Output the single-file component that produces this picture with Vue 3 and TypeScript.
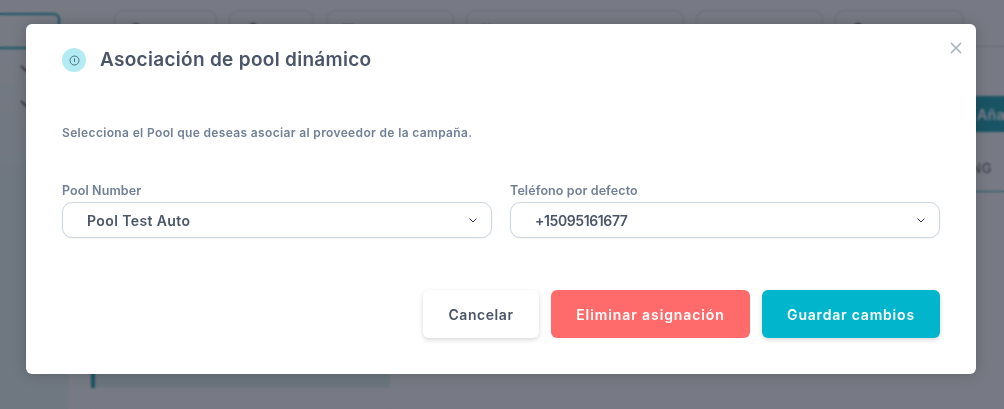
<script setup lang="ts">
const filters = [
  { w: 103, pad: 15, kind: 'search' },
  { w: 85, pad: 17, kind: 'user' },
  { w: 128, pad: 13, kind: 'cal' },
  { w: 218, pad: 15, kind: 'bars' },
  { w: 127, pad: 15, kind: '' },
  { w: 129, pad: 16, kind: 'user' },
]
</script>

<template>
  <div class="page">
    <aside class="side">
      <div class="side-tab"></div>
      <svg class="side-chev" width="12" height="8" viewBox="0 0 12 8"><path d="M1 1l5 5 5-5" /></svg>
      <svg class="side-chev" width="12" height="8" viewBox="0 0 12 8"><path d="M1 1l5 5 5-5" /></svg>
    </aside>
    <main class="content">
      <div class="toolbar">
        <div
          v-for="(f, i) in filters"
          :key="i"
          class="filter"
          :style="{ width: f.w + 'px', paddingLeft: f.pad + 'px' }"
        >
          <svg v-if="f.kind" width="16" height="16" viewBox="0 0 16 16">
            <circle v-if="f.kind === 'search'" cx="6" cy="6" r="5" />
            <circle v-if="f.kind === 'user'" cx="6" cy="5" r="4" fill="currentColor" />
            <path v-if="f.kind === 'cal'" d="M1 5h14M1 5v8M15 5v8M4 1v8M8 1v8M12 1v8M1 3h14" />
            <path v-if="f.kind === 'bars'" d="M2 1v12M7 1v12" />
          </svg>
        </div>
      </div>
      <div class="body">
        <div class="panel"><div class="row"></div></div>
        <div class="detail">
          <button class="add">Añadir</button>
          <div class="thead">TRACKING</div>
        </div>
      </div>
    </main>
    <div class="scrim"></div>
    <section class="modal">
      <button class="close" aria-label="Cerrar">
        <svg width="12" height="12" viewBox="0 0 12 12"><path d="M1 1l10 10M11 1L1 11" /></svg>
      </button>
      <header class="head">
        <span class="badge">
          <svg width="11" height="11" viewBox="0 0 11 11">
            <circle cx="5.5" cy="5.5" r="4.5" />
            <path d="M5.5 3.4v3.6" />
          </svg>
        </span>
        <h2>Asociación de pool dinámico</h2>
      </header>
      <p class="lead">Selecciona el Pool que deseas asociar al proveedor de la campaña.</p>
      <div class="fields">
        <label class="field">
          <span class="lbl">Pool Number</span>
          <span class="select">
            <span class="val">Pool Test Auto</span>
            <svg width="8" height="5" viewBox="0 0 8 5"><path d="M.5.5 4 4 7.5.5" /></svg>
          </span>
        </label>
        <label class="field">
          <span class="lbl">Teléfono por defecto</span>
          <span class="select">
            <span class="val num">+15095161677</span>
            <svg width="8" height="5" viewBox="0 0 8 5"><path d="M.5.5 4 4 7.5.5" /></svg>
          </span>
        </label>
      </div>
      <div class="actions">
        <button class="btn cancel">Cancelar</button>
        <button class="btn danger">Eliminar asignación</button>
        <button class="btn save">Guardar cambios</button>
      </div>
    </section>
  </div>
</template>

<style scoped>
.page {
  position: relative;
  width: 1004px;
  height: 409px;
  overflow: hidden;
  display: flex;
  background: #f6f6f7;
  font-family: Inter, "Open Sans", sans-serif;
}
.side {
  width: 69px;
  flex: none;
  box-sizing: border-box;
  padding-top: 13px;
  border-right: 1px solid #eee;
  background: linear-gradient(180deg, #f6f6f7 0, #e2eeee 180px);
}
.side-tab {
  box-sizing: border-box;
  width: 60px;
  height: 36px;
  border: 2px solid #0a96a8;
  border-left: 0;
  border-radius: 0 6px 6px 0;
  margin-bottom: 16px;
}
.side-chev {
  display: block;
  margin: 0 0 27px 20px;
  fill: none;
  stroke: #222;
  stroke-width: 1.5;
}
.content { flex: 1; min-width: 0; display: flex; flex-direction: column; }
.toolbar {
  flex: none;
  height: 47px;
  box-sizing: border-box;
  padding: 10px 0 0 45px;
  display: flex;
  gap: 12px;
  border-bottom: 1px solid #c5cad2;
}
.filter {
  height: 40px;
  box-sizing: border-box;
  border: 1px solid #c5cbd4;
  border-radius: 10px;
  padding-top: 12px;
  flex: none;
  color: #333;
}
.filter svg { display: block; fill: none; stroke: #333; stroke-width: 1.4; }
.body { flex: 1; display: flex; min-height: 0; }
.panel {
  flex: none;
  width: 301px;
  margin-left: 21px;
  box-sizing: border-box;
  border: 1px solid #eee;
  border-width: 0 1px;
}
.row {
  height: 341px;
  box-sizing: border-box;
  border-left: 4px solid #0a96a8;
  background: #d8e8e8;
}
.detail { flex: 1; min-width: 0; padding-top: 49px; }
.add {
  display: block;
  width: 110px;
  height: 36px;
  margin-left: 580px;
  padding: 0 0 0 6px;
  border: 0;
  text-align: left;
  background: #0a96a8;
  color: #fff;
  font: 600 14px Inter, sans-serif;
  letter-spacing: 0.4px;
}
.thead {
  height: 60px;
  box-sizing: border-box;
  padding: 28px 12px 0 0;
  border-bottom: 1px solid #0a96a8;
  text-align: right;
  font-size: 13px;
  line-height: 16px;
  color: #555;
  letter-spacing: 0.6px;
}
.scrim {
  position: absolute;
  inset: 0;
  background: rgba(35, 40, 55, 0.6);
  backdrop-filter: blur(1px);
}
.modal {
  position: absolute;
  left: 26px;
  top: 24px;
  width: 950px;
  height: 350px;
  box-sizing: border-box;
  padding: 24px 36px 36px;
  background: #fff;
  border-radius: 6px;
  box-shadow: 0 0 14px rgba(0, 0, 0, 0.2);
  display: flex;
  flex-direction: column;
}
.close {
  position: absolute;
  top: 18px;
  right: 14px;
  width: 12px;
  height: 12px;
  padding: 0;
  border: 0;
  background: none;
  display: flex;
}
.close path { stroke: #a0aec0; stroke-width: 1.5; fill: none; }
.head { display: flex; align-items: center; gap: 14px; height: 24px; }
.badge {
  width: 24px;
  height: 24px;
  border-radius: 50%;
  background: #b2ebf2;
  display: flex;
  align-items: center;
  justify-content: center;
}
.badge svg { fill: none; stroke: #4a7280; stroke-width: 1; }
h2 {
  margin: 0;
  font-size: 19px;
  line-height: 24px;
  font-weight: 600;
  color: #4a5568;
  letter-spacing: 0.3px;
}
.lead {
  margin: 51px 0 0;
  font-size: 12px;
  line-height: 20px;
  font-weight: 600;
  color: #718096;
  letter-spacing: 0.35px;
}
.fields {
  margin-top: 41px;
  display: grid;
  grid-template-columns: 430px 430px;
  gap: 18px;
}
.field { display: flex; flex-direction: column; }
.lbl {
  font-size: 12.5px;
  line-height: 14px;
  font-weight: 600;
  color: #718096;
  letter-spacing: 0.1px;
  margin-bottom: 4px;
}
.select {
  height: 36px;
  box-sizing: border-box;
  border: 1px solid #cbd5e0;
  border-radius: 10px;
  box-shadow: 0 1px 2px rgba(0, 0, 0, 0.05);
  display: flex;
  align-items: center;
  justify-content: space-between;
  padding: 0 14px 0 24px;
  font-size: 14px;
  font-weight: 600;
  color: #4a5568;
}
.val { letter-spacing: 0.4px; }
.val.num { letter-spacing: -0.4px; }
.select svg { fill: none; stroke: #2d3748; stroke-width: 1; }
.actions {
  margin-top: auto;
  display: flex;
  justify-content: flex-end;
  gap: 12px;
}
.btn {
  height: 48px;
  border: 0;
  border-radius: 6px;
  font: 600 14px Inter, sans-serif;
  letter-spacing: 0.8px;
  box-shadow: 0 2px 5px rgba(0, 0, 0, 0.15);
}
.cancel { width: 116px; background: #fff; color: #4a5568; letter-spacing: 0.55px; }
.danger { width: 199px; background: #ff6b6b; color: #fff; box-shadow: none; letter-spacing: 0.9px; }
.save { width: 178px; background: #00b5cc; color: #fff; }
</style>
